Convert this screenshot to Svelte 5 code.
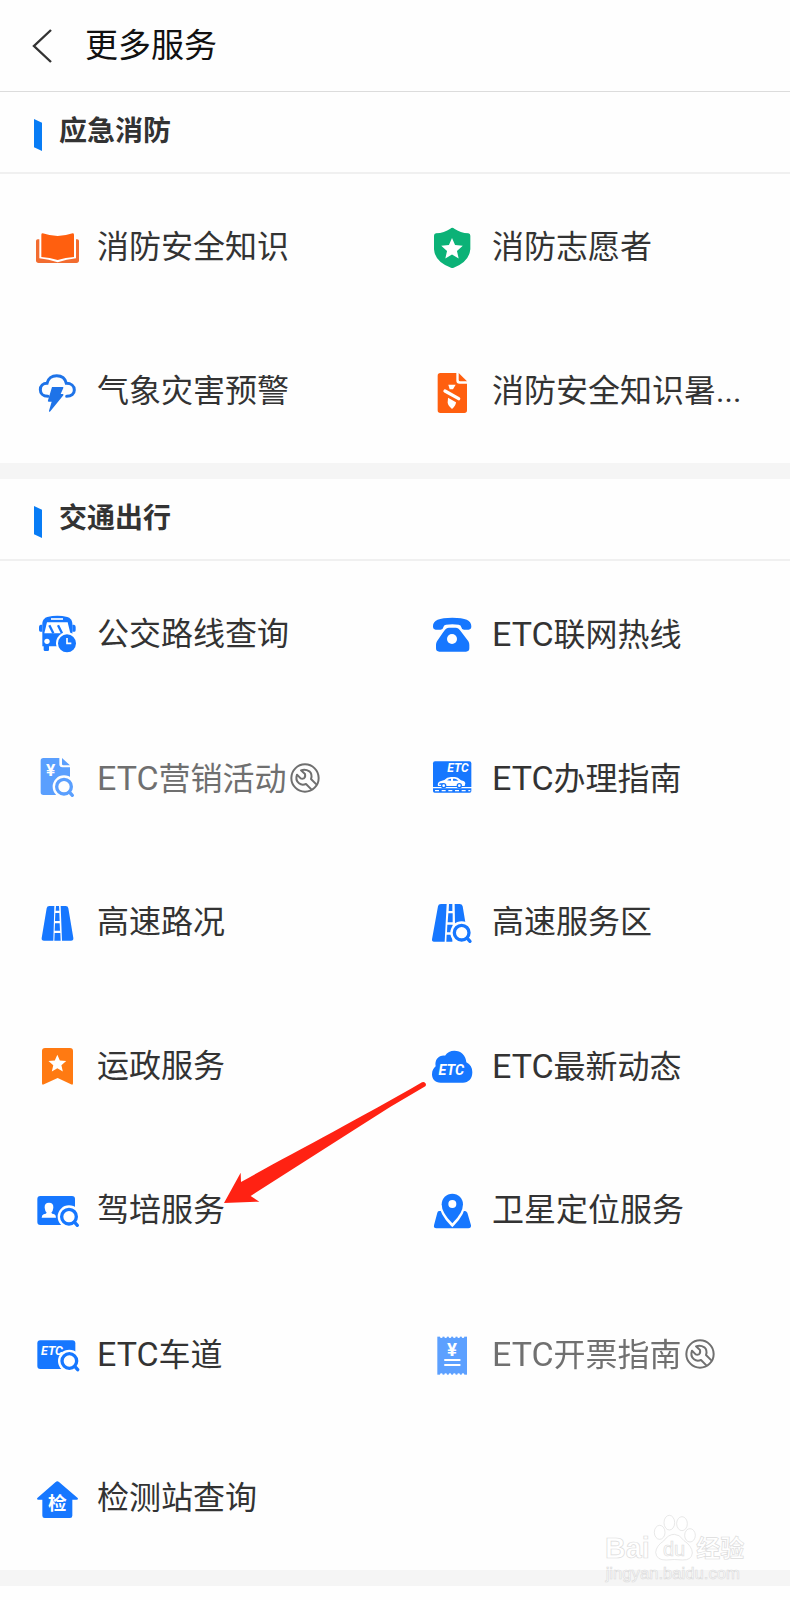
<script lang="ts">
  type Service = { name: string; icon: string; latin?: string; paused?: boolean; pointed?: boolean };

  const sections: Array<{ title: string; services: Service[] }> = [
    {
      title: '应急消防',
      services: [
        { name: '消防安全知识', icon: 'book' },
        { name: '消防志愿者', icon: 'shield' },
        { name: '气象灾害预警', icon: 'storm' },
        { name: '消防安全知识暑...', icon: 'file' }
      ]
    },
    {
      title: '交通出行',
      services: [
        { name: '公交路线查询', icon: 'bus' },
        { latin: 'ETC', name: '联网热线', icon: 'phone' },
        { latin: 'ETC', name: '营销活动', icon: 'promo', paused: true },
        { latin: 'ETC', name: '办理指南', icon: 'card' },
        { name: '高速路况', icon: 'road' },
        { name: '高速服务区', icon: 'roadSearch' },
        { name: '运政服务', icon: 'bookmark' },
        { latin: 'ETC', name: '最新动态', icon: 'cloud' },
        { name: '驾培服务', icon: 'license', pointed: true },
        { name: '卫星定位服务', icon: 'pin' },
        { latin: 'ETC', name: '车道', icon: 'lane' },
        { latin: 'ETC', name: '开票指南', icon: 'receipt', paused: true },
        { name: '检测站查询', icon: 'house' }
      ]
    }
  ];

  // five pointed star around cx, cy
  const star = (cx: number, cy: number, r: number) =>
    Array.from({ length: 10 }, (_, i) => {
      const len = i % 2 ? r * 0.46 : r;
      const a = (Math.PI / 5) * i - Math.PI / 2;
      return `${(cx + len * Math.cos(a)).toFixed(1)},${(cy + len * Math.sin(a)).toFixed(1)}`;
    }).join(' ');
</script>

{#snippet lens(x: number, y: number)}
  <circle cx={x} cy={y} r="34" fill="#fff" />
  <path d="M{x + 16} {y + 16} L{x + 25} {y + 26}" stroke="#fff" stroke-width="20" />
  <circle cx={x} cy={y} r="22" fill="#fff" stroke="#1677ff" stroke-width="10" />
  <path d="M{x + 17} {y + 17} L{x + 25} {y + 26}" stroke="#1677ff" stroke-width="10" stroke-linecap="round" />
{/snippet}

{#snippet glyph(icon: string)}
  <svg class="icon" viewBox="0 0 138 138" fill="#1677ff" aria-hidden="true">
    {#if icon === 'book'}
      <path fill="#f26c30" d="M11 46 H130 Q135 46 135 51 V109 Q135 117 127 117 H14 Q6 117 6 109 V51 Q6 46 11 46Z" />
      <path fill="#fff" d="M16 22 H126 V103 Q98 106 71 115 Q44 106 16 103Z" />
      <path fill="#ff5f0f" d="M26 28 Q50 36 71 36 Q92 36 116 28 Q120 28 120 32 V99 Q95 100 71 108 Q47 100 22 99 V32 Q22 28 26 28Z" />
    {:else if icon === 'shield'}
      <path fill="#0bb277" d="M64 14 Q70 9 76 14 Q94 26 118 28 Q124 29 124 35 V76 Q120 114 74 131 Q70 133 66 131 Q18 114 15 76 V35 Q15 29 21 28 Q46 26 64 14Z" />
      <polygon fill="#fff" points={star(69, 76, 34)} />
    {:else if icon === 'storm'}
      <path fill="none" stroke="#1e73e8" stroke-width="9" stroke-linecap="round" d="M42 85 C26 85 19 75 19 65 C19 54 27 46 39 46 C42 31 54 23 68 23 C83 23 94 32 97 46 C111 46 121 54 121 66 C121 78 112 85 98 85" />
      <path fill="#1e73e8" d="M54 57 H86 Q89 57 88 60 L80 78 H86 Q90 79 88 82 L49 130 Q45 134 45 128 L53 101 H44 Q40 101 42 97Z" />
    {:else if icon === 'file'}
      <path fill="#ff5f0f" d="M34 15 H82 V38 Q82 47 91 47 H114 V127 Q114 135 106 135 H34 Q26 135 26 127 V23 Q26 15 34 15Z" />
      <path fill="#ff5f0f" d="M89 15 L114 40 H94 Q89 40 89 35Z" />
      <path fill="#fff" d="M58 50 H80 L72 64 H62Z" />
      <path stroke="#fff" stroke-width="10" stroke-linecap="round" d="M48 69 L89 92" />
      <path fill="#fff" d="M57 89 L81 103 Q81 112 69 123 Q57 112 56 104Z" />
    {:else if icon === 'bus'}
      <path d="M40 18 Q70 10 100 18 Q113 22 115 36 V106 H25 V36 Q27 22 40 18Z" />
      <path d="M25 41 V62 H19 Q15 62 15 57 V48 Q15 42 20 41Z M115 41 V62 H122 Q125 62 125 57 V48 Q125 42 120 41Z" />
      <rect x="29" y="98" width="16" height="22" rx="4" />
      <path fill="none" stroke="#fff" stroke-width="5" d="M51 24 H87" />
      <path fill="#fff" d="M39 34 H101 L109 67 H31Z" />
      <path stroke="#1677ff" stroke-width="7" d="M46 43 L58 67 M72 43 L84 67" />
      <circle fill="#fff" cx="39" cy="91" r="8" />
      <circle fill="#fff" cx="99" cy="97" r="33" />
      <circle cx="99" cy="97" r="27" />
      <path fill="none" stroke="#fff" stroke-width="5" d="M99 81 V97 H112" />
    {:else if icon === 'phone'}
      <path d="M12 46 C12 28 30 20 70 20 C110 20 127 28 127 46 Q127 56 119 56 H105 Q98 56 97 49 Q96 42 89 41 Q70 38 51 41 Q44 42 43 49 Q42 56 35 56 H20 Q12 56 12 46Z" />
      <path d="M43 63 Q51 50 60 50 H80 Q89 50 97 63 L118 91 Q121 96 121 102 V112 Q121 122 111 122 H31 Q21 122 21 112 V102 Q21 96 24 91Z" />
      <circle fill="#fff" cx="69" cy="84" r="15" />
    {:else if icon === 'promo'}
      <path d="M28 9 H76 V28 Q76 37 85 37 H108 V120 H28 Q20 120 20 112 V17 Q20 9 28 9Z" />
      <path d="M84 9 L108 31 H88 Q84 31 84 27Z" />
      <text class="mark" x="50" y="62" font-size="52">¥</text>
      {@render lens(90, 95)}
    {:else if icon === 'card'}
      <path d="M18 19 H121 Q127 19 127 25 V96 H12 V25 Q12 19 18 19Z" />
      <text class="mark slant" x="87" y="52" font-size="36">ETC</text>
      <path fill="#fff" d="M27 93 Q24 82 34 79 L46 75 Q54 66 66 66 H78 Q86 66 96 76 Q108 78 109 85 L107 93Z" />
      <path d="M54 76 Q59 71 66 71 V77Z M72 71 H78 Q84 72 88 77 H72Z M32 85 H44 V89 H30Z" />
      <circle cx="44" cy="92" r="8" />
      <circle cx="91" cy="92" r="8" />
      <circle cx="44" cy="92" r="4" fill="#fff" />
      <circle cx="91" cy="92" r="4" fill="#fff" />
      <path d="M12 100 H127 V108 Q127 113 122 113 H17 Q12 113 12 108Z" />
      <path stroke="#fff" stroke-width="4" stroke-dasharray="12 8" d="M18 107 H124" />
    {:else if icon === 'road'}
      <path d="M46 21 H61 L58 125 H30 Q22 125 23 117 L38 28 Q39 21 46 21Z M80 21 H95 Q102 21 103 28 L118 117 Q119 125 111 125 H84Z" />
      <path d="M66 21 H75 L76 35 H65Z M64 42 H76 L77 66 H63Z M63 73 H77 L78 95 H62Z M62 102 H79 L80 125 H61Z" />
    {:else if icon === 'roadSearch'}
      <path d="M36 15 H53 L47 128 H15 Q8 128 9 121 L27 22 Q28 15 36 15Z M77 15 H92 Q99 15 101 22 L110 76 H78Z" />
      <path d="M60 15 H70 V36 H59Z M58 43 H71 V70 H56Z M55 77 H71 V100 H54Z M53 107 H70 V128 H52Z" />
      {@render lens(98, 101)}
    {:else if icon === 'bookmark'}
      <path fill="#ff7a12" d="M33 15 H108 Q117 15 117 24 V121 Q117 127 111 124 L71 105 L30 124 Q24 127 24 121 V24 Q24 15 33 15Z" />
      <polygon fill="#fff" points={star(70, 63, 28)} />
    {:else if icon === 'cloud'}
      <path d="M35 119 C18 119 9 108 9 94 C9 82 14 75 20 70 C16 50 30 36 48 38 C55 27 64 23 76 23 C96 23 111 37 112 58 C124 64 130 74 130 88 C130 108 118 119 102 119Z" />
      <text class="mark slant" x="67" y="97" font-size="43">ETC</text>
    {:else if icon === 'license'}
      <rect x="10" y="27" width="113" height="87" rx="9" />
      <path fill="#fff" d="M45 47 Q59 47 58 62 Q57 72 52 77 Q53 80 61 82 Q66 84 66 92 H23 Q23 84 29 82 Q37 80 38 77 Q33 72 32 62 Q31 47 45 47Z" />
      {@render lens(105, 89)}
    {:else if icon === 'pin'}
      <path d="M30 72 H108 Q112 72 115 77 L126 115 Q127 124 118 124 H22 Q13 124 15 115 L25 77 Q26 72 30 72Z" />
      <path fill="#fff" stroke="#fff" stroke-width="14" d="M70 111 Q38 78 38 52 A32 32 0 0 1 102 52 Q102 78 70 111Z" />
      <path d="M70 109 Q38 78 38 52 A32 32 0 0 1 102 52 Q102 78 70 109Z" />
      <circle fill="#fff" cx="70" cy="51" r="12" />
    {:else if icon === 'lane'}
      <rect x="10" y="28" width="114" height="86" rx="9" />
      <text class="mark slant" x="54" y="72" font-size="37">ETC</text>
      {@render lens(106, 90)}
    {:else if icon === 'receipt'}
      <rect x="25" y="17" width="89" height="114" />
      <path stroke="#fff" stroke-width="8" stroke-linecap="round" stroke-dasharray="0 13" d="M37 17 H108 M37 131 H108" />
      <text class="mark" x="69" y="74" font-size="56">¥</text>
      <path stroke="#fff" stroke-width="6" stroke-linecap="round" d="M48 87 H92 M48 102 H92" />
    {:else if icon === 'house'}
      <path d="M65 21 Q70 17 75 21 L131 69 Q134 74 128 74 H115 V122 Q115 129 108 129 H32 Q25 129 25 122 V74 H13 Q7 74 10 69Z" />
      <text class="mark" x="70" y="106" font-size="56">检</text>
    {/if}
  </svg>
{/snippet}

<div class="page">
  <header class="topbar">
    <button class="back" type="button" aria-label="返回">
      <svg viewBox="0 0 20 34" fill="none" stroke="#333" stroke-width="2.4"><path d="M19 1 L2 17 L19 33" /></svg>
    </button>
    <h1>更多服务</h1>
  </header>

  {#each sections as section}
    <section>
      <h2>{section.title}</h2>
      <ul>
        {#each section.services as service}
          <li>
            <a href="#service" class:paused={service.paused}>
              {@render glyph(service.icon)}
              <span class="name">{#if service.latin}<span class="latin">{service.latin}</span>{/if}{service.name}</span>
              {#if service.paused}
                <svg class="wrench" viewBox="0 0 90 90" fill="none" stroke="#333" stroke-width="6" aria-hidden="true">
                  <circle cx="45" cy="45" r="41" />
                  <path stroke-linejoin="round" d="M64 79 L48 63 Q36 68 27 61 Q15 52 21 35 L32 46 Q36 48 42 46 Q47 42 45 33 L33 22 Q46 17 58 25 Q68 34 63 48 L79 64" />
                </svg>
              {/if}
            </a>
            {#if service.pointed}
              <svg class="arrow" viewBox="0 0 612 369" fill="#ff2213" aria-hidden="true">
                <path d="M0 366 L50 275 L51 303 C200 220 400 116 594 4 A8 8 0 0 1 604 16 Q500 75 398 142 L80 345 L106 362Z" />
              </svg>
            {/if}
          </li>
        {/each}
      </ul>
    </section>
  {/each}

  <svg class="watermark" viewBox="0 0 441 216" fill="#fff" stroke="#dcdcdc" stroke-width="2">
    <text x="6" y="136" font-size="86" font-weight="bold">Bai</text>
    <ellipse cx="170" cy="58" rx="16" ry="21" />
    <ellipse cx="199" cy="29" rx="16" ry="22" />
    <ellipse cx="237" cy="32" rx="16" ry="21" />
    <ellipse cx="261" cy="67" rx="16" ry="20" />
    <path d="M214 64 Q230 64 242 82 Q268 100 268 120 Q266 142 238 141 Q214 138 190 141 Q160 142 158 118 Q160 98 182 84 Q196 64 214 64Z" />
    <text x="180" y="128" font-size="60">du</text>
    <text x="280" y="131" font-size="72" font-weight="bold">经验</text>
    <text x="8" y="199" font-size="50">jingyan.baidu.com</text>
  </svg>
</div>

<style>
  :global(body) {
    background: #fefefe;
  }

  .page {
    position: relative;
    padding-bottom: 14px;
    font-family: Roboto, "Noto Sans CJK SC", sans-serif;
    color: #333;
  }

  .topbar {
    display: flex;
    align-items: center;
    height: 91px;
    padding-left: 32px;
    border-bottom: 1px solid #dcdcdc;
  }

  .back {
    width: 20px;
    height: 34px;
    margin-right: 33px;
    padding: 0;
    border: none;
    background: none;
    cursor: pointer;
  }

  .back svg {
    display: block;
    width: 20px;
    height: 34px;
  }

  h1 {
    margin: 0;
    font-size: 33px;
    font-weight: 400;
    line-height: 48px;
    color: #111;
  }

  section {
    border-bottom: 16px solid #f5f5f5;
  }

  h2 {
    display: flex;
    align-items: center;
    height: 80px;
    margin: 0;
    padding-left: 34px;
    border-bottom: 2px solid #f0f0f0;
    font-size: 28px;
    font-weight: 700;
    line-height: 40px;
  }

  /* slanted blue marker before the title */
  h2::before {
    content: '';
    width: 8px;
    height: 32px;
    margin: 6px 17px 0 0;
    background: #087cf5;
    clip-path: polygon(0 0, 100% 12%, 100% 100%, 0 88%);
  }

  ul {
    display: grid;
    grid-template-columns: 1fr 1fr;
    margin: 0;
    padding: 1px 0 0;
    list-style: none;
  }

  li {
    position: relative;
    min-width: 0;
  }

  a {
    display: flex;
    align-items: center;
    height: 144px;
    padding-left: 34px;
    color: inherit;
    text-decoration: none;
    white-space: nowrap;
  }

  .paused {
    opacity: 0.7;
  }

  .icon {
    flex: none;
    width: 46px;
    height: 46px;
    margin-right: 17px;
  }

  .name {
    font-size: 32px;
    line-height: 48px;
  }

  .latin {
    font-size: 34px;
  }

  .wrench {
    width: 30px;
    height: 30px;
    margin-left: 3px;
  }

  .mark {
    fill: #fff;
    font-weight: 700;
    text-anchor: middle;
  }

  .slant {
    font-style: italic;
  }

  /* lies over the neighbouring cells, tip at the service name */
  .arrow {
    position: absolute;
    left: 224px;
    bottom: 78px;
    width: 204px;
    height: 123px;
    z-index: 1;
    pointer-events: none;
  }

  .watermark {
    position: absolute;
    right: 40px;
    bottom: 15px;
    width: 147px;
    height: 72px;
    font-family: "Liberation Sans", "Noto Sans CJK SC", sans-serif;
  }
</style>
